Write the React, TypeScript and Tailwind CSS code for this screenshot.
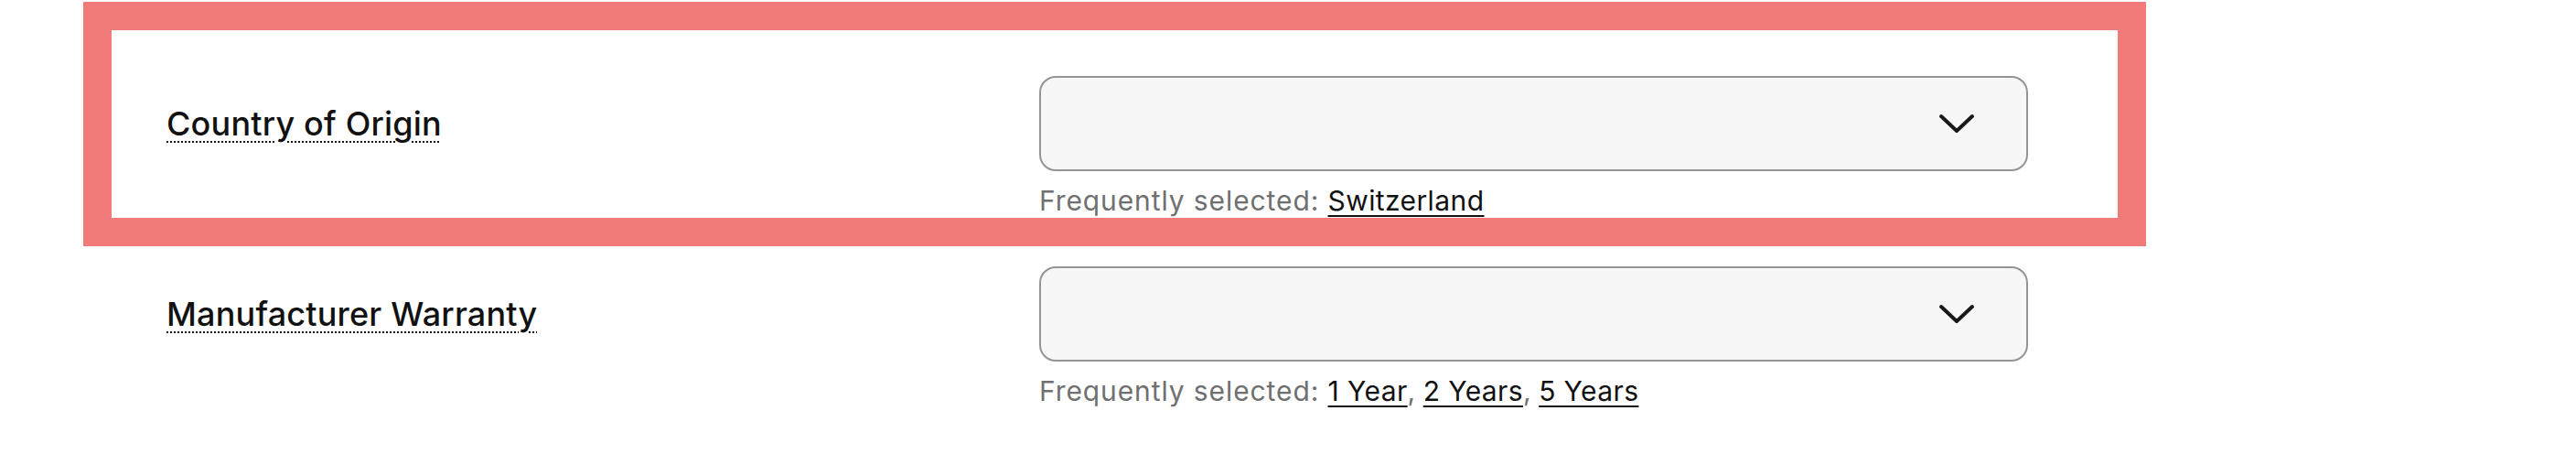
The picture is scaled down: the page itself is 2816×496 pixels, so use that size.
import React from "react";

type Row = {
  label: string;
  options: string[];
};

const ROWS: Row[] = [
  { label: "Country of Origin", options: ["Switzerland"] },
  { label: "Manufacturer Warranty", options: ["1 Year", "2 Years", "5 Years"] },
];

function Chevron() {
  return (
    <svg width="40" height="24" viewBox="0 0 40 24" fill="none" stroke="#191919" strokeWidth="4" strokeLinecap="round" strokeLinejoin="round">
      <polyline points="3,4 20,20 37,4" />
    </svg>
  );
}

function SpecRow({ row }: { row: Row }) {
  return (
    <div className="flex items-start">
      <div className="w-[954px] h-[104px] flex items-center">
        <span className="text-[36px] leading-[44px] font-medium tracking-[0.2px] text-[#111] underline decoration-dotted decoration-2 underline-offset-[6px]">
          {row.label}
        </span>
      </div>
      <div className="flex flex-col">
        <button className="w-[1081px] h-[104px] rounded-[18px] border-2 border-[#959595] bg-[#f7f7f7] flex items-center justify-end pr-[56px]">
          <Chevron />
        </button>
        <p className="mt-[13px] text-[30px] leading-[38px] tracking-[0.9px] text-[#707070]">
          Frequently selected:{" "}
          {row.options.map((o, i) => (
            <React.Fragment key={o}>
              <a className="text-[#111] tracking-[0.4px] underline decoration-2 underline-offset-[5px]">{o}</a>
              {i < row.options.length - 1 && <span className="text-[#707070] tracking-[0px]">, </span>}
            </React.Fragment>
          ))}
        </p>
      </div>
    </div>
  );
}

export default function App() {
  return (
    <div className="w-[2816px] h-[496px] bg-white font-['Inter',sans-serif]">
      <div className="ml-[91px] w-[2255px] pt-[2px]">
        {/* highlighted row */}
        <div className="border-[31px] border-[#f17b7b] pl-[60px] pt-[50px]">
          <SpecRow row={ROWS[0]} />
        </div>
        <div className="pl-[91px] pt-[22px]">
          <SpecRow row={ROWS[1]} />
        </div>
      </div>
    </div>
  );
}
